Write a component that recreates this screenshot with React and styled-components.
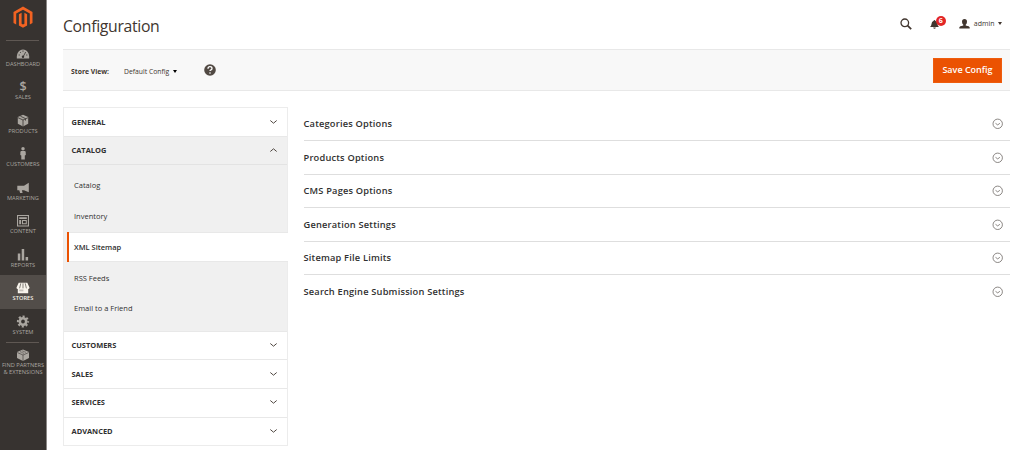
import React from 'react';
import styled, { createGlobalStyle } from 'styled-components';

const Global = createGlobalStyle`
  *, *::before, *::after { box-sizing: border-box; }
  body { margin: 0; background: #fff; color: #41362f; font-family: "Open Sans", sans-serif; overflow: hidden; }
  ul { list-style: none; margin: 0; padding: 0; }
  svg { display: block; flex: none; }
`;

const Page = styled.div`
  display: flex;
  height: 450px;
`;

const Sidebar = styled.nav`
  width: 46px;
  flex: none;
  background: #373330;
  box-shadow: 1px 0 #8b8886;
  display: flex;
  flex-direction: column;
`;

const LogoBox = styled.div`
  height: 40px;
  padding-top: 6px;
  display: flex;
  justify-content: center;
`;

const Divider = styled.div`
  height: 1px;
  flex: none;
  margin: 0 7px 0 6px;
  background: #5f5853;
`;

const NavItem = styled.div`
  height: 33.53px;
  flex: none;
  padding-top: ${(p) => p.$top || 7}px;
  display: flex;
  flex-direction: column;
  align-items: center;
  background: ${(p) => (p.$active ? '#524d49' : 'transparent')};
  color: ${(p) => (p.$active ? '#f7f3eb' : '#aaa6a0')};
`;

const NavGroup = styled.div`
  height: 301px;
  flex: none;
  margin-top: -0.3px;
  margin-bottom: 0.3px;
`;

const NavLabel = styled.span`
  font-size: 5.7px;
  line-height: 7px;
  font-weight: ${(p) => (p.$active ? 600 : 500)};
  text-align: center;
  text-transform: uppercase;
  white-space: nowrap;
`;

const Main = styled.main`
  flex: 1;
  padding: 0 14px 0 17px;
`;

const Header = styled.header`
  height: 49px;
  display: flex;
  justify-content: space-between;
`;

const Title = styled.h1`
  margin: 14px 0 0;
  font-size: 15.8px;
  line-height: 24px;
  font-weight: 400;
  letter-spacing: -0.33px;
`;

const HeaderTools = styled.div`
  height: 47px;
  padding-right: 8px;
  display: flex;
  align-items: center;
`;

const BellBox = styled.div`
  position: relative;
  margin: 2px 0 0 18px;
`;

const Badge = styled.span`
  position: absolute;
  left: 6px;
  top: -4px;
  width: 10px;
  height: 10px;
  border-radius: 50%;
  background: #e22626;
  color: #fff;
  font-size: 7px;
  line-height: 10px;
  font-weight: 700;
  text-align: center;
`;

const UserBox = styled.div`
  margin-left: 20px;
  display: flex;
  align-items: center;
  font-size: 7px;
  line-height: 10px;
`;

const UserName = styled.span`
  margin: 0 3.5px 0 4px;
`;

const Caret = styled.i`
  border: solid transparent;
  border-width: ${(p) => p.$height}px ${(p) => p.$side}px 0;
  border-top-color: ${(p) => p.$color};
`;

const Toolbar = styled.section`
  height: 42px;
  padding: 0 8px;
  display: flex;
  align-items: center;
  background: #f8f8f8;
  border-top: 1px solid #e8e8e8;
  border-bottom: 1px solid #e8e8e8;
  font-size: 6.8px;
  line-height: 10px;
`;

const ScopeLabel = styled.strong`
  width: 53px;
  margin-top: 3px;
  font-weight: 700;
`;

const ScopeSelect = styled.div`
  width: 80px;
  margin-top: 3px;
  display: flex;
  align-items: center;
  gap: 4px;
`;

const SaveButton = styled.button`
  width: 69px;
  height: 25px;
  margin-left: auto;
  padding: 0;
  border: 1px solid #ee5c0c;
  background: #eb5202;
  color: #fff;
  font: 600 9px/20px "Open Sans", sans-serif;
`;

const Columns = styled.div`
  display: flex;
  padding-top: 16px;
`;

const Menu = styled.div`
  width: 225px;
  flex: none;
  border: 1px solid #ececec;
`;

const Group = styled.section`
  & + & { border-top: 1px solid #e8e8e8; }
`;

const GroupTitle = styled.div`
  height: 27.7px;
  padding: 0 9px 0.7px 7.5px;
  display: flex;
  align-items: center;
  justify-content: space-between;
  font-size: 7.45px;
  font-weight: 700;
  color: #303030;
  background: ${(p) => (p.$open ? '#f0f0f0' : '#fff')};
`;

const SubList = styled.ul`
  padding: 4.7px 0 6.5px 3px;
  border-top: 1px solid #e3e3e3;
  background: #f0f0f0;
`;

const SubItem = styled.li`
  height: 30.8px;
  margin-right: ${(p) => (p.$active ? -1 : 0)}px;
  padding: 0 0 0.5px ${(p) => (p.$active ? 5 : 7)}px;
  display: flex;
  align-items: center;
  border-left: ${(p) => (p.$active ? '2px solid #eb5202' : '0')};
  background: ${(p) => (p.$active ? '#fff' : 'transparent')};
  box-shadow: ${(p) => (p.$active ? 'inset 0 1px #e8e8e8, inset 0 -1px #e8e8e8' : 'none')};
  font-size: 7.5px;
  font-weight: ${(p) => (p.$active ? 600 : 400)};
  color: #303030;
`;

const Options = styled.div`
  flex: 1;
  margin-left: 15.5px;
`;

const OptionRow = styled.div`
  height: 33.5px;
  padding-right: 7px;
  display: flex;
  align-items: center;
  justify-content: space-between;
  font-size: 9.25px;
  font-weight: 600;
  letter-spacing: 0.2px;
  color: #303030;
  & + & { border-top: 1px solid #dedede; }
  &:first-child { height: 33px; }
`;

const icons = {
  dashboard: (
    <>
      <path d="M.8 10.500C.5 5 3 1.500 7 1.500s6.500 3.500 6.200 9z" />
      <path d="M9.700 4L7 9M2.600 7h1.300M4 4l.9.9M7 2.500v1.300M11.400 7h-1.300" stroke="#373330" strokeWidth=".8" fill="none" />
      <circle cx="7" cy="8.800" r="1.200" fill="#373330" />
    </>
  ),
  customers: <path transform="translate(0 -1)" d="M7 0a1.700 1.700 0 1 1 0 3.500A1.700 1.700 0 0 1 7 0zM5.400 4h3.200q1 0 1.100 1l.1 3-1 .5V12.500H5.300V8.500l-1-.5.1-3q.1-1 1-1z" />,
  products: (
    <>
      <path d="M7 -.2l5.200 2.300v6.700l-5.200 2.700-5.200-2.700V2.100z" />
      <path d="M2 2.700L7 5l5-2.300M7 5V11.500M4.400 1.200l5.100 2.400v2" fill="none" stroke="#373330" strokeWidth=".8" />
    </>
  ),
  partners: (
    <>
      <path d="M7 .5l6 2.400v6.200l-6 2.900-6-2.900V2.900z" />
      <path d="M1.200 3.500L7 6l5.800-2.500M7 6v6M4.200 2.700l1.500.6M8.300 2.700l1.500.6M6.300 1.900l1.500.6M6.300 3.700l1.500.6" fill="none" stroke="#373330" strokeWidth=".6" />
    </>
  ),
  marketing: <path d="M12.800 .8v9.500L8 8.200H5.900l.7 2.800H4.100L3.300 8.200H1.300V3.800H8z" />,
  content: <path fillRule="evenodd" d="M1 0h12v11.500H1zM2.100 1.100v9.300h9.800V1.100zM3.200 2.300h7.600v1.800H3.200zM3.200 5h1.900v4.300H3.200zM6 5h4.800v4.300H6zM7 6v2.300h2.800V6z" />,
  reports: <path d="M1.800 4.500h2.500v7H1.800zM5.700 0h2.500V11.500H5.700zM9.600 8h2.500V11.500H9.600z" />,
  stores: (
    <>
      <path d="M2.700 .8h8.600l2.200 4.700q0 1.500-1.300 1.500v4.300H1.800V7Q.5 7 .5 5.500z" />
      <path d="M4.800 1.300L3.600 6.300M7 1.300v5M9.200 1.300l1.200 5" fill="none" stroke="#524d49" strokeWidth=".7" />
      <path d="M3.200 7.500h4.200v1.800H3.200z" fill="#524d49" opacity=".3" />
    </>
  ),
  system: (
    <>
      <circle cx="7" cy="5.500" r="3.200" fill="none" stroke="currentColor" strokeWidth="2.600" />
      <circle cx="7" cy="5.500" r="5.100" fill="none" stroke="currentColor" strokeWidth="2" strokeDasharray="2.100 1.905" strokeDashoffset="1.050" />
    </>
  ),
};

const Glyph = styled.svg.attrs({ viewBox: '0 0 14 13', fill: 'currentColor' })`
  width: 14px;
  height: 13px;
  overflow: visible;
`;

const Dollar = styled.span`
  height: 13px;
  font-size: 12.5px;
  line-height: 12px;
  font-weight: 600;
`;

const Logo = () => (
  <svg width="20" height="23" viewBox="0 0 20 23" fill="#f26322">
    <path d="M10 .5l9.500 5.500v11l-2.700 1.600V7.600L10 3.700 3.200 7.600v11L.5 17V6z" />
    <path d="M5.900 8.200l2.700-1.500v11.100l1.400.8 1.400-.8V6.700l2.700 1.500v11.200L10 21.800l-4.100-2.400z" />
  </svg>
);

const Chevron = ({ up }) => (
  <svg width="9" height="6" viewBox="0 0 9 6" fill="none" stroke="#514943" strokeWidth="1">
    <path d={up ? 'M1.300 4.500l3.200-2.700 3.200 2.700' : 'M1.300 1.500l3.200 2.700 3.200-2.700'} />
  </svg>
);

const CircleChevron = () => (
  <svg width="11" height="11" viewBox="0 0 11 11" fill="none" stroke="#6f6a66" strokeWidth=".8">
    <circle cx="5.700" cy="5.800" r="4.700" />
    <path d="M3.500 5.300l2.200 1.600 2.200-1.600" />
  </svg>
);

const nav = [
  ['dashboard', 'Dashboard'],
  ['sales', 'Sales'],
  ['products', 'Products'],
  ['customers', 'Customers'],
  ['marketing', 'Marketing'],
  ['content', 'Content'],
  ['reports', 'Reports'],
  ['stores', 'Stores'],
  ['system', 'System'],
];

const groups = ['General', 'Catalog', 'Customers', 'Sales', 'Services', 'Advanced'];
const catalogItems = ['Catalog', 'Inventory', 'XML Sitemap', 'RSS Feeds', 'Email to a Friend'];
const options = [
  'Categories Options',
  'Products Options',
  'CMS Pages Options',
  'Generation Settings',
  'Sitemap File Limits',
  'Search Engine Submission Settings',
];

export default function App() {
  return (
    <Page>
      <Global />
      <Sidebar>
        <LogoBox><Logo /></LogoBox>
        <Divider />
        <NavGroup>
          {nav.map(([id, label]) => (
            <NavItem key={id} $active={id === 'stores'}>
              {id === 'sales' ? <Dollar>$</Dollar> : <Glyph>{icons[id]}</Glyph>}
              <NavLabel $active={id === 'stores'}>{label}</NavLabel>
            </NavItem>
          ))}
        </NavGroup>
        <Divider />
        <NavItem $top={6}>
          <Glyph>{icons.partners}</Glyph>
          <NavLabel>Find Partners<br />&amp; Extensions</NavLabel>
        </NavItem>
      </Sidebar>
      <Main>
        <Header>
          <Title>Configuration</Title>
          <HeaderTools>
            <svg width="12" height="12" viewBox="0 0 12 12" fill="none" stroke="#41362f">
              <circle cx="4.800" cy="4.800" r="3.800" strokeWidth="1.300" />
              <path d="M7.600 7.600l3.600 3.600" strokeWidth="1.700" />
            </svg>
            <BellBox>
              <svg width="9" height="9" viewBox="0 0 9 9" fill="#41362f">
                <path d="M4.500 0q.8 0 .8.800Q7.500 1.500 7.500 4q0 1.500 1.400 3H.1Q1.500 5.500 1.500 4q0-2.500 2.200-3.200 0-.8.800-.8zM3.200 7.400h2.600q-.2 1.400-1.300 1.400T3.200 7.400z" />
              </svg>
              <Badge>6</Badge>
            </BellBox>
            <UserBox>
              <svg width="11" height="10" viewBox="0 0 11 10" fill="#41362f">
                <path d="M5.500 0Q8 0 8 2.700 8 4.700 6.700 5.700v.8Q10.700 7.200 10.700 8.500V9.500H.3V8.500Q.3 7.200 4.300 6.500v-.8Q3 4.700 3 2.700 3 0 5.500 0z" />
              </svg>
              <UserName>admin</UserName>
              <Caret $side={2} $height={3} $color="#41362f" />
            </UserBox>
          </HeaderTools>
        </Header>
        <Toolbar>
          <ScopeLabel>Store View:</ScopeLabel>
          <ScopeSelect>Default Config <Caret $side={2} $height={3} $color="#000" /></ScopeSelect>
          <svg width="12" height="12" viewBox="0 0 12 12">
            <circle cx="6" cy="6" r="5.800" fill="#514943" />
            <path d="M4 4.700q0-2 2-2t2 1.700q0 .9-1 1.400T6 7.100" fill="none" stroke="#fff" strokeWidth="1.300" />
            <circle cx="6" cy="9" r=".8" fill="#fff" />
          </svg>
          <SaveButton>Save Config</SaveButton>
        </Toolbar>
        <Columns>
          <Menu>
            {groups.map((name) => {
              const open = name === 'Catalog';
              return (
                <Group key={name}>
                  <GroupTitle $open={open}>{name.toUpperCase()}<Chevron up={open} /></GroupTitle>
                  {open && (
                    <SubList>
                      {catalogItems.map((item) => (
                        <SubItem key={item} $active={item === 'XML Sitemap'}>{item}</SubItem>
                      ))}
                    </SubList>
                  )}
                </Group>
              );
            })}
          </Menu>
          <Options>
            {options.map((name) => (
              <OptionRow key={name}>{name}<CircleChevron /></OptionRow>
            ))}
          </Options>
        </Columns>
      </Main>
    </Page>
  );
}
